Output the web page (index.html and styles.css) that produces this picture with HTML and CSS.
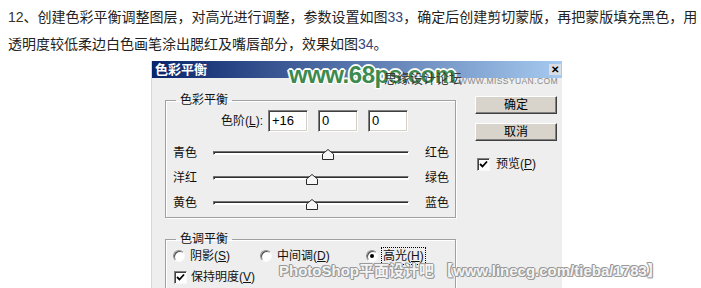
FILE: index.html
```html
<!DOCTYPE html>
<html>
<head>
<meta charset="utf-8">
<link rel="stylesheet" href="styles.css">
</head>
<body>
<p class="intro"><span class="num">12</span>、创建色彩平衡调整图层，对高光进行调整，参数设置如图<span class="ref">33</span>，确定后创建剪切蒙版，再把蒙版填充黑色，用<br>透明度较低柔边白色画笔涂出腮红及嘴唇部分，效果如图<span class="ref">34</span>。</p>
<div class="dialog">
  <div class="titlebar">
    <span class="title">色彩平衡</span>
    <span class="close">✕</span>
  </div>
  <div class="body">
    <div class="groups">
      <fieldset class="group group-color">
        <legend>色彩平衡</legend>
        <div class="levels">
          <span class="levels-label">色阶(<u>L</u>):</span>
          <span class="field">+16</span>
          <span class="field">0</span>
          <span class="field">0</span>
        </div>
        <div class="sliders">
          <div class="slider-row">
            <span class="s-label">青色</span>
            <span class="track"><svg class="thumb" style="left:108px" width="12" height="11" viewBox="0 0 12 11"><polygon points="6,0.5 11.5,5 11.5,10.5 0.5,10.5 0.5,5" /></svg></span>
            <span class="s-label s-right">红色</span>
          </div>
          <div class="slider-row">
            <span class="s-label">洋红</span>
            <span class="track"><svg class="thumb" style="left:92px" width="12" height="11" viewBox="0 0 12 11"><polygon points="6,0.5 11.5,5 11.5,10.5 0.5,10.5 0.5,5" /></svg></span>
            <span class="s-label s-right">绿色</span>
          </div>
          <div class="slider-row">
            <span class="s-label">黄色</span>
            <span class="track"><svg class="thumb" style="left:92px" width="12" height="11" viewBox="0 0 12 11"><polygon points="6,0.5 11.5,5 11.5,10.5 0.5,10.5 0.5,5" /></svg></span>
            <span class="s-label s-right">蓝色</span>
          </div>
        </div>
      </fieldset>
      <fieldset class="group group-tone">
        <legend>色调平衡</legend>
        <div class="radios">
          <label class="opt opt-1"><span class="radio"></span><span>阴影(<u>S</u>)</span></label>
          <label class="opt opt-2"><span class="radio"></span><span>中间调(<u>D</u>)</span></label>
          <label class="opt"><span class="radio checked"></span><span class="focus">高光(<u>H</u>)</span></label>
        </div>
        <label class="check-row">
          <span class="checkbox"><svg width="9" height="9" viewBox="0 0 9 9"><polyline points="1,4 3.5,6.5 8,1.5" /></svg></span>
          <span>保持明度(<u>V</u>)</span>
        </label>
      </fieldset>
    </div>
    <div class="actions">
      <span class="btn btn-ok">确定</span>
      <span class="btn btn-cancel">取消</span>
      <label class="check-row preview">
        <span class="checkbox"><svg width="9" height="9" viewBox="0 0 9 9"><polyline points="1,4 3.5,6.5 8,1.5" /></svg></span>
        <span>预览(<u>P</u>)</span>
      </label>
    </div>
  </div>
  <span class="wm-68ps">www.68ps.com</span>
  <span class="wm-forum">思缘设计论坛</span>
  <span class="wm-missyuan">WWW.MISSYUAN.COM</span>
  <span class="wm-bottom">PhotoShop平面设计吧 【www.linecg.com/tieba/1783】</span>
</div>
</body>
</html>
```
FILE: styles.css
```css
* { box-sizing: border-box; }

body {
  margin: 0;
  padding: 4px 0 0 8px;
  background: #fff;
  font-family: "Liberation Sans", "Noto Sans CJK SC", sans-serif;
  color: #222;
}

.intro {
  margin: 0;
  font-size: 14px;
  line-height: 27px;
  white-space: nowrap;
}

.num { color: #3a3320; }
.ref { color: #34477a; }

.dialog {
  position: relative;
  margin: 3px 0 0 143px;
  width: 411px;
  height: 240px;
  background: #eeeeee;
  border-left: 1px solid #d8d8d8;
  font-size: 12px;
  line-height: 16px;
  color: #111;
  overflow: visible;
}

.titlebar {
  position: relative;
  height: 17px;
  background: linear-gradient(90deg, #0a246a 0%, #a6caf0 100%);
  display: flex;
  align-items: center;
}

.title {
  color: #fff;
  font-weight: bold;
  font-size: 13px;
  line-height: 17px;
  padding-left: 3px;
}

.close {
  position: absolute;
  right: 1px;
  top: 3px;
  width: 12px;
  height: 11px;
  font-size: 10px;
  line-height: 11px;
  font-weight: bold;
  text-align: center;
  color: #000;
  background: #d8dde6;
}

.body {
  display: flex;
  padding: 14px 0 0 13px;
  gap: 19px;
}

.groups {
  width: 291px;
  display: flex;
  flex-direction: column;
}

.group {
  margin: 0;
  padding: 0;
  min-width: 0;
  border: 1px solid #a0a0a0;
  box-shadow: inset 1px 1px 0 #fff, 1px 1px 0 #fff;
}

.group legend {
  margin-left: 10px;
  padding: 0 4px;
  font-size: 12px;
  line-height: 16px;
}

.group-color { padding-bottom: 2px; }

.levels {
  display: flex;
  align-items: center;
  margin: 2px 0 0 46px;
  gap: 10px;
}

.levels-label {
  width: 51px;
  margin-right: -5px;
  text-align: right;
}

.field {
  width: 40px;
  height: 22px;
  background: #fff;
  border: 1px solid;
  border-color: #808080 #fff #fff #808080;
  box-shadow: inset 1px 1px 0 #404040, inset -1px -1px 0 #d4d0c8;
  padding-left: 3px;
  font-size: 13px;
  line-height: 20px;
  color: #000;
}

.sliders { margin-top: 8px; }

.slider-row {
  display: flex;
  align-items: center;
  height: 25px;
  padding-left: 7px;
}

.s-label { width: 26px; }
.s-right { margin-left: 16px; }

.track {
  position: relative;
  margin-left: 14px;
  width: 196px;
  height: 4px;
  background: #fff;
  border: 1px solid;
  border-color: #707070 #fff #fff #707070;
  box-shadow: inset 1px 1px 0 #303030;
}

.thumb {
  position: absolute;
  top: -3px;
  display: block;
}

.thumb polygon {
  fill: #f6f6f6;
  stroke: #2a2a2a;
  stroke-width: 1;
}

.group-tone {
  margin-top: 13px;
  padding-bottom: 8px;
}

.radios {
  display: flex;
  align-items: center;
  height: 18px;
  padding-left: 7px;
}

.opt {
  display: flex;
  align-items: center;
  gap: 5px;
}

.opt-1 { width: 87px; }
.opt-2 { width: 106px; }

.radio {
  position: relative;
  width: 12px;
  height: 12px;
  border-radius: 50%;
  background: #fff;
  border: 1px solid;
  border-color: #909090 #fafafa #fafafa #909090;
  box-shadow: inset 1px 1px 0 #505050;
}

.radio.checked::after {
  content: "";
  position: absolute;
  left: 3px;
  top: 3px;
  width: 4px;
  height: 4px;
  border-radius: 50%;
  background: #000;
}

.focus {
  outline: 1px dotted #000;
  padding: 0 1px;
  margin-left: -1px;
}

.check-row {
  display: flex;
  align-items: center;
  gap: 4px;
  height: 18px;
  margin: 3px 0 0 8px;
}

.checkbox {
  width: 13px;
  height: 13px;
  background: #fff;
  border: 1px solid;
  border-color: #808080 #fafafa #fafafa #808080;
  box-shadow: inset 1px 1px 0 #404040;
  display: flex;
  align-items: center;
  justify-content: center;
}

.checkbox svg polyline {
  fill: none;
  stroke: #000;
  stroke-width: 1.8;
}

.actions {
  width: 82px;
  display: flex;
  flex-direction: column;
}

.btn {
  height: 18px;
  background: #d8d4cc;
  border: 1px solid;
  border-color: #fff #404040 #404040 #fff;
  box-shadow: inset -1px -1px 0 #808080;
  text-align: center;
  line-height: 16px;
  color: #000;
}

.btn-ok { margin-top: 4px; }
.btn-cancel { margin-top: 9px; }

.preview {
  margin: 14px 0 0 2px;
  gap: 6px;
}

.wm-68ps {
  position: absolute;
  left: 137px;
  top: 0;
  font-family: "Liberation Sans", sans-serif;
  font-weight: bold;
  font-size: 24px;
  line-height: 28px;
  letter-spacing: -0.5px;
  color: #3d8a4e;
  text-shadow: 1px 0 #fff, -1px 0 #fff, 0 1px #fff, 0 -1px #fff, 1px 1px #fff, -1px -1px #fff, 1px -1px #fff, -1px 1px #fff, 2px 0 #eaf3ea, -2px 0 #eaf3ea, 0 2px #eaf3ea, 0 -2px #eaf3ea;
}

.wm-forum {
  position: absolute;
  left: 232px;
  top: 10px;
  font-size: 13px;
  line-height: 16px;
  color: #3a3a3a;
}

.wm-missyuan {
  position: absolute;
  left: 307px;
  top: 15px;
  font-size: 8.5px;
  line-height: 10px;
  letter-spacing: 0.4px;
  color: #8a8a8a;
}

.wm-bottom {
  position: absolute;
  left: 127px;
  top: 201px;
  white-space: nowrap;
  font-family: "Liberation Sans", "Noto Sans CJK SC", sans-serif;
  font-weight: bold;
  font-size: 15px;
  line-height: 18px;
  color: #f4f4f4;
  text-shadow: 1px 0 #9a9a9a, -1px 0 #9a9a9a, 0 1px #9a9a9a, 0 -1px #9a9a9a, 1px 1px #9a9a9a, -1px -1px #9a9a9a;
}
```
